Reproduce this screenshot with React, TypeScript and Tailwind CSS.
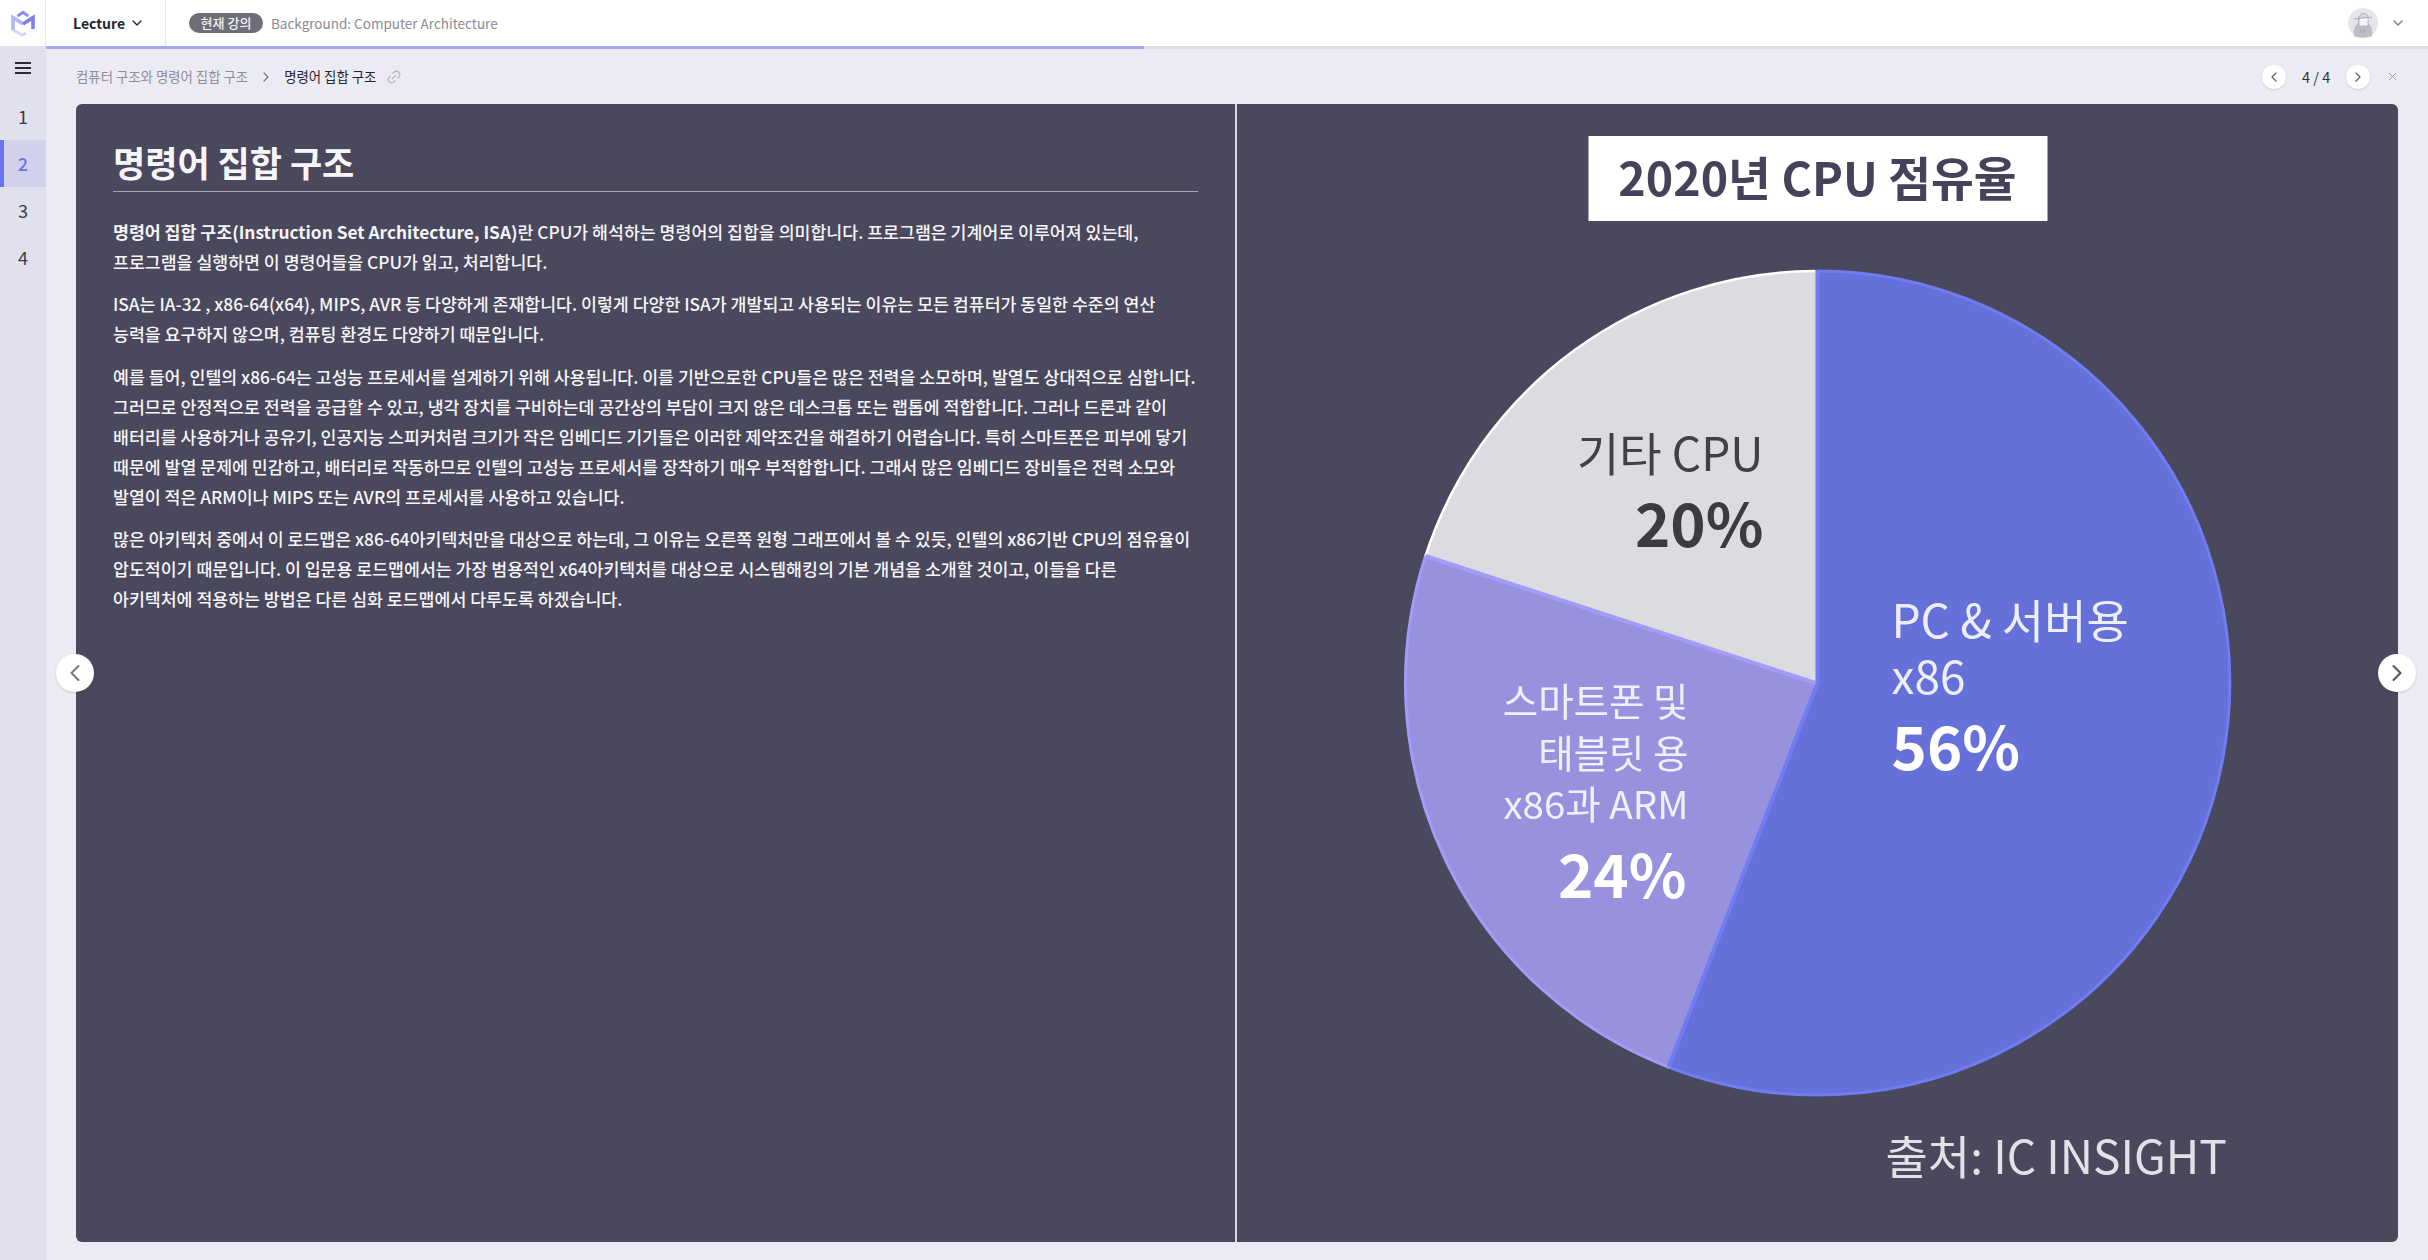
import { ChevronDown, ChevronLeft, ChevronRight, Link2, X } from "lucide-react";

const font = { fontFamily: '"Noto Sans CJK KR", "Noto Sans", sans-serif' };

function Logo() {
  return (
    <svg width="26" height="28" viewBox="0 0 26 28" fill="none">
      <path d="M7.5 7 L13 3.5 L18.5 7" stroke="#8e90ee" strokeWidth="3.2" />
      <path d="M3 21 V8.5 L13 15" stroke="#b3b5f4" strokeWidth="3.6" />
      <path d="M13 15 L23 8.5 V20" stroke="#7d80ea" strokeWidth="3.6" />
      <path d="M3 21 L12.5 26 L16 24" stroke="#d3d4f8" strokeWidth="3" />
    </svg>
  );
}

function Avatar() {
  return (
    <svg width="30" height="30" viewBox="0 0 30 30">
      <circle cx="15" cy="15" r="15" fill="#e4e4e9" />
      <path d="M6 28 C5 22 7 18 10 15 L10 11 L20 11 L20 15 C23 18 25 22 24 28 C19 30 11 30 6 28 Z" fill="#bdbdc7" />
      <rect x="11" y="9" width="9" height="9" fill="#f4f4f7" stroke="#a5a5b0" strokeWidth="0.7" />
      <path d="M6 11 L24 9" stroke="#a5a5b0" strokeWidth="0.9" />
      <path d="M11 9 Q15 2 20 8" fill="#d8d8de" stroke="#a5a5b0" strokeWidth="0.8" />
      <path d="M13 21 V25 M16 21 V25" stroke="#9d9da8" strokeWidth="0.8" />
    </svg>
  );
}

const paragraphs = [
  [
    <>
      <b className="font-bold">명령어 집합 구조(Instruction Set Architecture, ISA)</b>란 CPU가 해석하는 명령어의 집합을 의미합니다. 프로그램은 기계어로 이루어져 있는데,
    </>,
    "프로그램을 실행하면 이 명령어들을 CPU가 읽고, 처리합니다.",
  ],
  [
    "ISA는 IA-32 , x86-64(x64), MIPS, AVR 등 다양하게 존재합니다. 이렇게 다양한 ISA가 개발되고 사용되는 이유는 모든 컴퓨터가 동일한 수준의 연산",
    "능력을 요구하지 않으며, 컴퓨팅 환경도 다양하기 때문입니다.",
  ],
  [
    "예를 들어, 인텔의 x86-64는 고성능 프로세서를 설계하기 위해 사용됩니다. 이를 기반으로한 CPU들은 많은 전력을 소모하며, 발열도 상대적으로 심합니다.",
    "그러므로 안정적으로 전력을 공급할 수 있고, 냉각 장치를 구비하는데 공간상의 부담이 크지 않은 데스크톱 또는 랩톱에 적합합니다. 그러나 드론과 같이",
    "배터리를 사용하거나 공유기, 인공지능 스피커처럼 크기가 작은 임베디드 기기들은 이러한 제약조건을 해결하기 어렵습니다. 특히 스마트폰은 피부에 닿기",
    "때문에 발열 문제에 민감하고, 배터리로 작동하므로 인텔의 고성능 프로세서를 장착하기 매우 부적합합니다. 그래서 많은 임베디드 장비들은 전력 소모와",
    "발열이 적은 ARM이나 MIPS 또는 AVR의 프로세서를 사용하고 있습니다.",
  ],
  [
    "많은 아키텍처 중에서 이 로드맵은 x86-64아키텍처만을 대상으로 하는데, 그 이유는 오른쪽 원형 그래프에서 볼 수 있듯, 인텔의 x86기반 CPU의 점유율이",
    "압도적이기 때문입니다. 이 입문용 로드맵에서는 가장 범용적인 x64아키텍처를 대상으로 시스템해킹의 기본 개념을 소개할 것이고, 이들을 다른",
    "아키텍처에 적용하는 방법은 다른 심화 로드맵에서 다루도록 하겠습니다.",
  ],
];

function PieFigure() {
  const f = '"Noto Sans CJK KR", sans-serif';
  return (
    <svg viewBox="1238 104 1160 1138" className="block h-full w-full blur-[0.6px]" fontFamily={f}>
      <rect x="1589" y="136" width="459" height="85" fill="#ffffff" />
      <text x="1818" y="196" textAnchor="middle" fontSize="46.5" fontWeight="700" fill="#44435a">2020년 CPU 점유율</text>

      <path d="M1818 683 L1818 271 A412 412 0 1 1 1669 1067 Z" fill="#6570d8" stroke="#6f7cf2" strokeWidth="3" strokeLinejoin="round" />
      <path d="M1818 683 L1669 1067 A412 412 0 0 1 1426 556 Z" fill="#9892de" stroke="#a39cf7" strokeWidth="3" strokeLinejoin="round" />
      <path d="M1818 683 L1426 556 A412 412 0 0 1 1818 271 Z" fill="#dbdbe0" />
      <path d="M1426 556 A412 412 0 0 1 1816 271" fill="none" stroke="#ffffff" strokeWidth="2.5" />
      <path d="M1818 683 L1669 1067" fill="none" stroke="#6f7cf2" strokeWidth="4" />
      <path d="M1816 683 L1426 556" fill="none" stroke="#a39cf7" strokeWidth="4" />
      <path d="M1818 271 L1818 683" fill="none" stroke="#6f7cf2" strokeWidth="4" />

      <text x="1764" y="471" textAnchor="end" fontSize="46" fill="#404045">기타 CPU</text>
      <text x="1764" y="547" textAnchor="end" fontSize="60" fontWeight="700" fill="#3c3c40">20%</text>

      <text x="1892" y="638" fontSize="46" fill="#eceefa">PC &amp; 서버용</text>
      <text x="1892" y="694" fontSize="46" fill="#eceefa">x86</text>
      <text x="1892" y="770" fontSize="60" fontWeight="700" fill="#ffffff">56%</text>

      <text x="1689" y="716" textAnchor="end" fontSize="38.5" fill="#f0effa">스마트폰 및</text>
      <text x="1689" y="768" textAnchor="end" fontSize="38.5" fill="#f0effa">태블릿 용</text>
      <text x="1689" y="819" textAnchor="end" fontSize="38.5" fill="#f0effa">x86과 ARM</text>
      <text x="1687" y="898" textAnchor="end" fontSize="60" fontWeight="700" fill="#ffffff">24%</text>

      <text x="1886" y="1174" fontSize="46" fill="#e2e2e6">출처: IC INSIGHT</text>
    </svg>
  );
}

export default function App() {
  return (
    <div className="flex h-screen w-full flex-col overflow-hidden bg-[#ecebf3]" style={font}>
      <header className="flex h-[46px] shrink-0 items-center bg-white">
        <div className="flex h-full w-[46px] items-center justify-center border-r border-[#e6e6ee]">
          <Logo />
        </div>
        <div className="flex h-full w-[120px] items-center gap-1 border-r border-[#e6e6ee] pl-[27px] text-[14px] font-bold text-[#26262e]">
          Lecture
          <ChevronDown className="h-4 w-4" strokeWidth={2} />
        </div>
        <span className="ml-[23px] flex h-[20px] w-[74px] items-center justify-center rounded-full bg-[#6f6e78] text-[13px] font-medium text-[#f0f0f4]">현재 강의</span>
        <span className="ml-2 text-[13.5px] text-[#8a8a92]">Background: Computer Architecture</span>
        <div className="ml-auto flex items-center gap-[12px] pr-[22px]">
          <Avatar />
          <ChevronDown className="h-4 w-4 text-[#77777f]" strokeWidth={2} />
        </div>
      </header>
      <div className="flex min-h-0 flex-1">
        <nav className="flex w-[46px] shrink-0 flex-col bg-[#e1e1ee]">
          <div className="flex h-[47px] items-center justify-center pb-[3px] text-[#2c2c34]">
            <svg width="18" height="14" viewBox="0 0 18 14" fill="none" stroke="currentColor" strokeWidth="2">
              <path d="M1 2 H17 M1 7 H17 M1 12 H17" />
            </svg>
          </div>
          {[1, 2, 3, 4].map((n) => (
            <div
              key={n}
              className={
                n === 2
                  ? "flex h-[47px] items-center justify-center border-l-[4px] border-[#6b72f0] bg-[#d1d1ec] pr-[4px] text-[18px] font-medium text-[#6b72f0]"
                  : "flex h-[47px] items-center justify-center text-[18px] text-[#3a3a42]"
              }
            >
              {n}
            </div>
          ))}
        </nav>
        <main className="relative flex min-w-0 flex-1 flex-col">
          <div className="h-[3px] shrink-0 bg-[#dcdbe6]">
            <div className="h-full w-[1098px] bg-[#a6a6f0]" />
          </div>
          <div className="flex h-[55px] shrink-0 items-center pl-[30px] pr-[30px] text-[13.4px]">
            <span className="text-[#8e8e96]">컴퓨터 구조와 명령어 집합 구조</span>
            <ChevronRight className="mx-[10px] h-4 w-4 text-[#77777f]" strokeWidth={1.8} />
            <span className="text-[#26262e]">명령어 집합 구조</span>
            <Link2 className="ml-[10px] h-4 w-4 -rotate-45 text-[#b0b0b8]" strokeWidth={1.8} />
            <div className="ml-auto flex items-center text-[14.5px] text-[#33333b]">
              <button className="flex h-6 w-6 items-center justify-center rounded-full bg-white shadow-sm">
                <ChevronLeft className="h-4 w-4 text-[#666670]" />
              </button>
              <span className="mx-[16px] w-[28px] whitespace-nowrap text-center">4 / 4</span>
              <button className="flex h-6 w-6 items-center justify-center rounded-full bg-white shadow-sm">
                <ChevronRight className="h-4 w-4 text-[#666670]" />
              </button>
              <X className="ml-[16px] mr-[-1px] h-[13px] w-[13px] text-[#8e8e96]" strokeWidth={1.6} />
            </div>
          </div>
          <div className="mb-[18px] ml-[30px] mr-[30px] flex min-h-0 flex-1 rounded-md bg-[#4a485c]">
            <section className="w-[1161px] shrink-0 border-r-2 border-[#d8d8de] px-[37px] pt-[31px] text-white">
              <h1 className="border-b border-[#a5a4b0] pb-[2px] text-[35px] font-bold leading-[54px] text-[#f7f7fb]">명령어 집합 구조</h1>
              <div className="pt-[25px] text-[17.3px] font-medium leading-[30px] text-[#f5f5f8]">
                {paragraphs.map((lines, i) => (
                  <p key={i} className="mb-[12.4px] whitespace-nowrap">
                    {lines.map((line, j) => (
                      <span key={j} className="block">{line}</span>
                    ))}
                  </p>
                ))}
              </div>
            </section>
            <section className="min-w-0 flex-1">
              <PieFigure />
            </section>
          </div>
          <button className="absolute left-[10px] top-[608px] flex h-[38px] w-[38px] items-center justify-center rounded-full bg-white shadow">
            <ChevronLeft className="h-7 w-7 text-[#77777f]" strokeWidth={1.8} />
          </button>
          <button className="absolute right-[12px] top-[608px] flex h-[38px] w-[38px] items-center justify-center rounded-full bg-white shadow">
            <ChevronRight className="h-7 w-7 text-[#55555f]" strokeWidth={1.8} />
          </button>
        </main>
      </div>
    </div>
  );
}
